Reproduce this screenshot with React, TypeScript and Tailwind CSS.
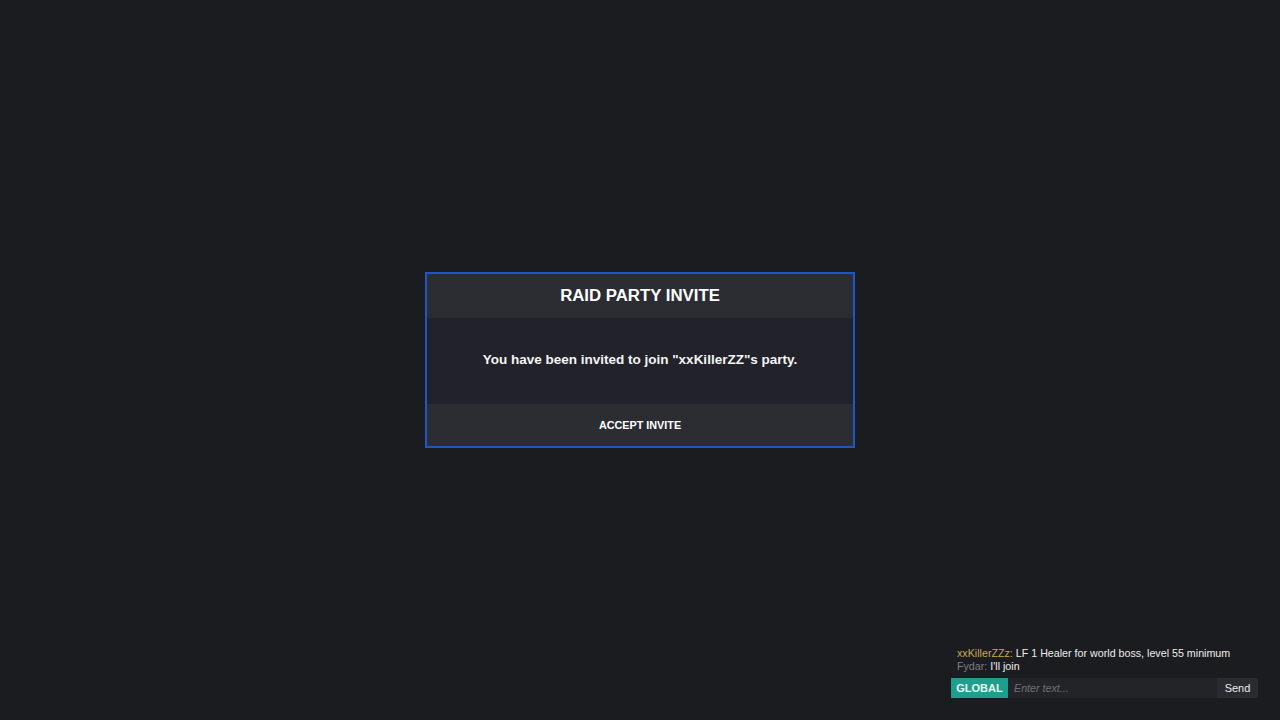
import React from "react";

export default function App() {
  return (
    <div
      className="relative w-full h-[720px] bg-[#1b1c20] overflow-hidden flex flex-col"
      style={{ fontFamily: '"Liberation Sans", Arial, sans-serif' }}
    >
      <div className="flex-1 flex items-start justify-center pt-[272px]">
        <div className="w-[430px] border-2 border-[#1e56c8] bg-[#22232a] flex flex-col">
          <div className="h-[44px] bg-[#2c2d33] flex items-center justify-center pb-[1px]">
            <h1 className="text-[16.8px] font-bold text-white">RAID PARTY INVITE</h1>
          </div>
          <div className="h-[86px] flex items-center justify-center pb-[1px]">
            <p className="text-[13.5px] font-bold text-[#f4f4f4]">
              You have been invited to join "xxKillerZZ"s party.
            </p>
          </div>
          <button className="h-[42px] bg-[#2c2d33] flex items-center justify-center text-[10.8px] font-bold text-white">
            ACCEPT INVITE
          </button>
        </div>
      </div>
      <div className="absolute right-[22px] bottom-[22px] w-[307px] flex flex-col">
        <div className="pl-[6px] text-[10.7px] leading-[13px] pb-[5px]">
          <div>
            <span className="text-[#c9a84c]">xxKillerZZz:</span>
            <span className="text-[#ececec]"> LF 1 Healer for world boss, level 55 minimum</span>
          </div>
          <div>
            <span className="text-[#7d7e83]">Fydar:</span>
            <span className="text-[#ececec]"> I'll join</span>
          </div>
        </div>
        <div className="flex h-[20px]">
          <div className="bg-[#1f9e8e] text-[#e8f5f2] text-[11px] font-bold flex items-center px-[6px] w-[57px] justify-center">
            GLOBAL
          </div>
          <div className="flex-1 bg-[#232429] flex items-center px-[6px] text-[10.7px] italic text-[#6f7075]">
            Enter text...
          </div>
          <div className="bg-[#2a2b30] text-[#ececec] text-[11px] flex items-center justify-center w-[41px]">
            Send
          </div>
        </div>
      </div>
    </div>
  );
}
